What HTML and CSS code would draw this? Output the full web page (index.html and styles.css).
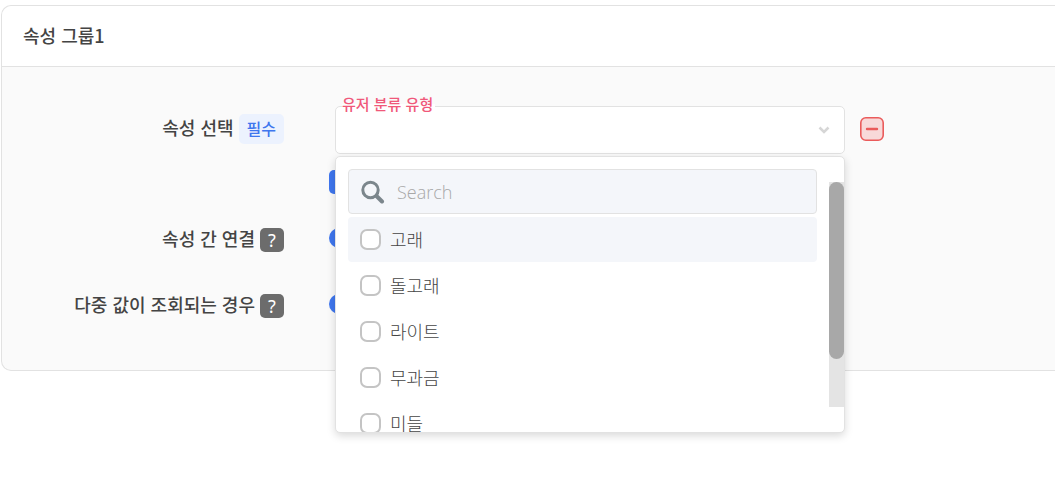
FILE: index.html
```html
<!DOCTYPE html>
<html lang="ko">
<head>
<meta charset="utf-8">
<title>속성 그룹1</title>
<link rel="stylesheet" href="styles.css">
</head>
<body>
<section class="card">
  <h2 class="card-title">속성 그룹1</h2>
  <div class="card-body">
    <div class="row">
      <div class="row-label tall"><span class="text">속성 선택</span><span class="badge">필수</span></div>
      <div class="row-content">
        <div class="select-line">
          <div class="select-wrap">
            <button type="button" class="select" aria-labelledby="type-label" aria-expanded="true">
              <svg class="chevron" viewBox="0 0 12 8" aria-hidden="true"><path d="M1.5 1.5 6 6l4.500-4.500"/></svg>
            </button>
            <span class="float-label" id="type-label">유저 분류 유형</span>
            <div class="menu">
              <div class="menu-list">
                <div class="search">
                  <svg class="search-icon" viewBox="0 0 24 24" aria-hidden="true"><circle cx="9.500" cy="10" r="7.700"/><path d="m15.500 16 5.500 5.500" stroke-width="4"/></svg>
                  <input class="search-input" type="text" placeholder="Search" aria-label="Search">
                </div>
                <label class="option active"><input class="check" type="checkbox"><span class="option-text">고래</span></label>
                <label class="option"><input class="check" type="checkbox"><span class="option-text">돌고래</span></label>
                <label class="option"><input class="check" type="checkbox"><span class="option-text">라이트</span></label>
                <label class="option"><input class="check" type="checkbox"><span class="option-text">무과금</span></label>
                <label class="option"><input class="check" type="checkbox"><span class="option-text">미들</span></label>
              </div>
              <div class="track"><div class="thumb"></div></div>
            </div>
          </div>
          <button type="button" class="remove" aria-label="삭제">
            <svg viewBox="0 0 24 24" aria-hidden="true"><rect x=".8" y=".8" width="22.400" height="22.400" rx="5"/><path d="M7 12h10"/></svg>
          </button>
        </div>
        <button type="button" class="add" aria-label="추가"></button>
      </div>
    </div>
    <div class="row">
      <div class="row-label"><span class="text">속성 간 연결</span><button type="button" class="help">?</button></div>
      <div class="row-content"><input class="radio" type="radio" name="link" aria-label="속성 간 연결" checked></div>
    </div>
    <div class="row last">
      <div class="row-label"><span class="text">다중 값이 조회되는 경우</span><button type="button" class="help">?</button></div>
      <div class="row-content"><input class="radio" type="radio" name="multi" aria-label="다중 값이 조회되는 경우" checked></div>
    </div>
  </div>
</section>
</body>
</html>
```
FILE: styles.css
```css
* { box-sizing: border-box; }
body {
  min-height: 100vh;
  margin: 0;
  padding: 5px 0 0 1px;
  background: #fff;
  color: #444;
  font: 18px/24px "Noto Sans CJK KR", sans-serif;
}
button, input { margin: 0; padding: 0; font: inherit; color: inherit; }
.card {
  border: 1px solid #e2e2e2;
  border-right: 0;
  border-radius: 10px 0 0 10px;
  background: #fafafa;
}
.card-title {
  margin: 0;
  padding: 17px 21px 19px;
  border-bottom: 1px solid #e2e2e2;
  border-radius: 10px 0 0 0;
  background: #fff;
  font-size: 18px;
  line-height: 24px;
  font-weight: 500;
}
.card-body {
  display: flex;
  flex-direction: column;
  gap: 34px;
  padding: 39px 0 52px;
}
.row {
  display: grid;
  grid-template-columns: 282px 1fr;
  column-gap: 45px;
}
.row.last { padding-top: 8px; }
.row-label {
  display: flex;
  justify-content: flex-end;
  align-items: center;
  align-self: start;
  gap: 5px;
  font-weight: 500;
}
.row-label.tall { height: 46px; }
.text { padding-bottom: 4px; line-height: 20px; }
.badge {
  padding: 2px 8px 4px;
  border-radius: 5px;
  background: #ecf2fe;
  color: #3f76ee;
  font-size: 16px;
}
.help {
  width: 24px;
  height: 24px;
  border: 0;
  border-radius: 5px;
  background: #6c6c6c;
  color: #fff;
  font: 400 18px/24px "Noto Sans", sans-serif;
}
.select-line {
  display: flex;
  align-items: center;
  gap: 15px;
  padding-left: 6px;
  margin-bottom: 16px;
}
.select-wrap { position: relative; width: 510px; }
.select {
  display: flex;
  align-items: center;
  justify-content: flex-end;
  width: 100%;
  height: 48px;
  padding-right: 14px;
  border: 1px solid #e2e2e2;
  border-radius: 5px;
  background: #fff;
}
.chevron { width: 12px; height: 8px; fill: none; stroke: #d6d6d6; stroke-width: 2.500; }
.float-label {
  position: absolute;
  top: -12px;
  left: 7px;
  padding-right: 2px;
  background: linear-gradient(transparent 10px, #fff 10px, #fff 14px, transparent 14px);
  color: #f0587a;
  font-size: 15px;
  line-height: 20px;
  font-weight: 500;
}
.menu {
  position: absolute;
  z-index: 2;
  top: 50px;
  left: 0;
  display: flex;
  width: 100%;
  height: 277px;
  overflow: hidden;
  border: 1px solid #e2e2e2;
  border-radius: 5px;
  background: #fff;
  box-shadow: 0 3px 8px rgba(0, 0, 0, .15);
}
.menu-list { flex: 1; padding: 12px; }
.search {
  display: flex;
  align-items: center;
  gap: 12px;
  height: 45px;
  margin-bottom: 3px;
  padding: 0 12px;
  border: 1px solid #e2e2e2;
  border-radius: 4px;
  background: #f4f6fa;
}
.search-icon { width: 24px; height: 24px; flex: none; fill: none; stroke: #7b868c; stroke-width: 3; stroke-linecap: round; }
.search-input {
  flex: 1;
  min-width: 0;
  border: 0;
  outline: 0;
  background: transparent;
  font: 300 18px/24px "Open Sans", "Noto Sans", sans-serif;
}
.search-input::placeholder { color: #a8a8a8; }
.option {
  display: flex;
  align-items: center;
  gap: 9px;
  height: 45px;
  margin-bottom: 1px;
  padding-left: 12px;
  border-radius: 4px;
  font-weight: 300;
}
.option-text { padding-bottom: 2px; }
.option.active { background: #f4f6fa; }
.check {
  appearance: none;
  width: 21px;
  height: 21px;
  border: 2px solid #c4c4c4;
  border-radius: 7px;
  background: #fff;
}
.track { width: 15px; height: 225px; margin-top: 25px; background: #e4e4e4; }
.thumb { height: 177px; border-radius: 8px; background: #a8a8a8; }
.remove { width: 24px; height: 24px; margin-bottom: 2px; border: 0; background: none; }
.remove svg { display: block; fill: #f8d9d9; stroke: #ea5b5b; stroke-width: 1.600; }
.remove path { stroke-width: 2.400; stroke-linecap: round; }
.add { display: block; width: 24px; height: 24px; border: 0; border-radius: 5px; background: #3f76ee; }
.radio {
  appearance: none;
  display: block;
  width: 20px;
  height: 20px;
  border-radius: 50%;
  background: #3f76ee;
}
```
